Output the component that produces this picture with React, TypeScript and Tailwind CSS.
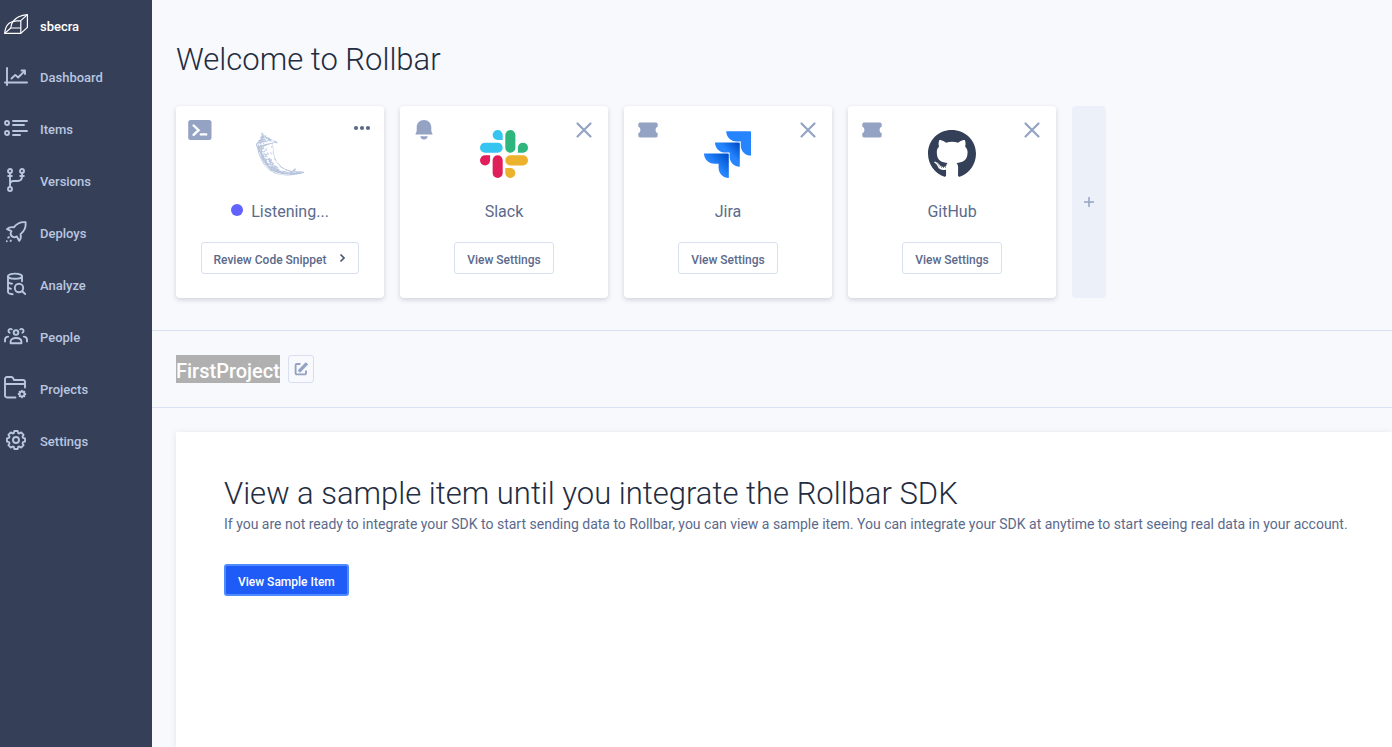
import type { ReactNode } from "react";
import { SiFlask } from "react-icons/si";
import { FaGithub } from "react-icons/fa";

function NavSvg({ children }: { children: ReactNode }) {
  return (
    <svg
      viewBox="0 0 24 24"
      className="size-6 shrink-0"
      fill="none"
      stroke="currentColor"
      strokeWidth="1.900"
      strokeLinecap="round"
      strokeLinejoin="round"
      aria-hidden="true"
    >
      {children}
    </svg>
  );
}

const navItems: { label: string; icon: ReactNode }[] = [
  {
    label: "Dashboard",
    icon: (
      <NavSvg>
        <path d="M3 4v17M1 18.500h22M7.500 14.500l3.800-3.600 2.800 2.600 6.200-6.200M17.500 6.500h3.500v3.500" />
      </NavSvg>
    ),
  },
  {
    label: "Items",
    icon: (
      <NavSvg>
        <circle cx="3" cy="7" r="2" />
        <circle cx="3" cy="17" r="2" />
        <path d="M9 5h14M9 9h11M9 15h14M9 19h7" />
      </NavSvg>
    ),
  },
  {
    label: "Versions",
    icon: (
      <NavSvg>
        <circle cx="6" cy="3" r="2" />
        <circle cx="18" cy="3" r="2" />
        <circle cx="6" cy="21" r="2" />
        <path d="M6 5.500v13M4.200 8h3.600M16.200 8h3.600M18 5.500v3c0 3-1.500 4.500-4.500 4.500H9.500c-2 0-3.500 1-3.500 3.500" />
      </NavSvg>
    ),
  },
  {
    label: "Deploys",
    icon: (
      <NavSvg>
        <path d="M21.600 2.200c-5.400-.5-9 1.400-11.800 5.200-2.600-.6-5.200.2-6.800 1.800l4.400 2-.9 2.500c.4 1.900 1.900 3.300 3.900 3.700l2.400-.9 2.400 4.300c1.600-1.800 2.100-4.200 1.300-6.600 4.300-3.200 5.600-7 5.100-12z" />
        <path d="M5 17.200l-.8.400M2.800 21.200h.01M6.800 20.600l-.2.400" />
      </NavSvg>
    ),
  },
  {
    label: "Analyze",
    icon: (
      <NavSvg>
        <ellipse cx="11" cy="4.200" rx="7" ry="2.600" />
        <path d="M4 4.200v15.800c0 1.200 2 1.900 4.600 2.300M18 4.200v5M4 9.500c0 1 1.600 1.800 4 2.200M4 14.800c0 1 1.400 1.600 3 2" />
        <circle cx="15" cy="16" r="4.200" />
        <path d="M18.200 19.200l3 2.800" />
      </NavSvg>
    ),
  },
  {
    label: "People",
    icon: (
      <NavSvg>
        <circle cx="12" cy="8.600" r="2.300" />
        <path d="M6.600 19.200v-1.600c0-2.300 2.200-3.600 5.400-3.600s5.400 1.300 5.400 3.600v1.600z" />
        <path d="M7.800 5.400a2 2 0 1 0-2.200 3.300M16.200 5.400a2 2 0 1 1 2.200 3.300" />
        <path d="M1 17.600v-1.800c0-2 1.400-3.200 3.200-3.200M23 17.600v-1.800c0-2-1.400-3.200-3.200-3.200" />
      </NavSvg>
    ),
  },
  {
    label: "Projects",
    icon: (
      <NavSvg>
        <path d="M11.500 21.500H3c-1.200 0-2-.8-2-2V3c0-1.200.8-2 2-2h4.300c1 0 1.600.5 2 1.400l.6 1.600h9.100c1.200 0 2 .8 2 2v5.500M1 8h20" />
        <circle cx="18" cy="18" r="2.500" />
        <path
          d="M18 14.600v.8M18 20.600v.8M14.600 18h.8M20.600 18h.8M15.600 15.600l.6.600M19.800 19.800l.6.600M20.400 15.600l-.6.600M16.200 19.800l-.6.600"
          strokeWidth="1.800"
        />
      </NavSvg>
    ),
  },
  {
    label: "Settings",
    icon: (
      <NavSvg>
        <path d="M10.300 3h3.400l.5 2 1.200.5 1.800-1.100 2.400 2.400-1.100 1.800.5 1.200 2 .5v3.400l-2 .5-.5 1.200 1.100 1.800-2.400 2.400-1.800-1.100-1.200.5-.5 2h-3.400l-.5-2-1.200-.5-1.800 1.100-2.400-2.400 1.100-1.800-.5-1.200-2-.5v-3.400l2-.5.5-1.200-1.100-1.800 2.400-2.400 1.800 1.100 1.200-.5z" />
        <circle cx="12" cy="12" r="3" />
      </NavSvg>
    ),
  },
];

function RollbarLogo() {
  return (
    <svg
      viewBox="0 0 24 24"
      className="size-6 shrink-0"
      fill="none"
      stroke="currentColor"
      strokeWidth="1.200"
      strokeLinejoin="round"
      aria-hidden="true"
    >
      <path d="M.7 20.400C1.100 16 2.200 12.600 4.600 10.700 6 9.600 7.400 9.200 8.700 8.600 11.800 4.600 16.200 2.200 23.400 1.600v12.800l-6.600 6z" />
      <path d="M16.800 20.400V7.600l6.600-6M8.700 8.600c2.600-.7 5-1 8.100-1M8.700 8.600C7.600 10.600 7 12.600 6.800 15M.7 20.400L6.800 15h10" />
    </svg>
  );
}

function Terminal() {
  return (
    <svg viewBox="0 0 24 24" className="size-6" aria-hidden="true">
      <rect x="0.200" y="2" width="23.300" height="20" rx="2.500" fill="#94a3c4" />
      <path
        d="M5.600 7.500l5 4.700-5 4.700M12.800 16.400h5.400"
        fill="none"
        stroke="#fff"
        strokeWidth="2.400"
        strokeLinecap="round"
      />
    </svg>
  );
}

function Bell() {
  return (
    <svg viewBox="0 0 24 24" className="size-6" fill="#94a3c4" aria-hidden="true">
      <path d="M12 2c4.300 0 7.300 3.200 7.300 7.400v3.800l1.100 2.400v1H3.600v-1l1.100-2.400V9.400C4.700 5.200 7.700 2 12 2z" />
      <path d="M8.200 18.200h7.600c-.4 2-1.900 3.300-3.800 3.300s-3.400-1.300-3.800-3.300z" />
    </svg>
  );
}

function Ticket() {
  return (
    <svg viewBox="0 0 24 24" className="size-6" fill="#94a3c4" aria-hidden="true">
      <path d="M4 4.500h16a1.700 1.700 0 0 1 1.700 1.700v2.600c-1.400.5-2.100 1.600-2.100 3.200s.7 2.700 2.100 3.200v2.600a1.700 1.700 0 0 1-1.700 1.700H4a1.700 1.700 0 0 1-1.700-1.700v-2.600c1.400-.5 2.100-1.600 2.100-3.200s-.7-2.700-2.100-3.200V6.200A1.700 1.700 0 0 1 4 4.500z" />
    </svg>
  );
}

function Close() {
  return (
    <svg viewBox="0 0 24 24" className="size-6" aria-hidden="true">
      <path
        d="M5.500 5.500l13 13M18.500 5.500l-13 13"
        stroke="#94a3c4"
        strokeWidth="2.200"
        strokeLinecap="round"
      />
    </svg>
  );
}

function Dots() {
  return (
    <svg viewBox="0 0 24 24" className="size-6" fill="#5b6a8c" aria-hidden="true">
      <circle cx="8" cy="10" r="2.100" />
      <circle cx="14" cy="10" r="2.100" />
      <circle cx="20" cy="10" r="2.100" />
    </svg>
  );
}

function Slack() {
  return (
    <svg viewBox="0 0 24 24" className="size-12" aria-hidden="true">
      <path
        fill="#e01e5a"
        d="M5.042 15.165a2.528 2.528 0 0 1-2.520 2.523A2.528 2.528 0 0 1 0 15.165a2.527 2.527 0 0 1 2.522-2.520h2.520v2.520zM6.313 15.165a2.527 2.527 0 0 1 2.521-2.520 2.527 2.527 0 0 1 2.521 2.520v6.313A2.528 2.528 0 0 1 8.834 24a2.528 2.528 0 0 1-2.521-2.522v-6.313z"
      />
      <path
        fill="#36c5f0"
        d="M8.834 5.042a2.528 2.528 0 0 1-2.521-2.520A2.528 2.528 0 0 1 8.834 0a2.528 2.528 0 0 1 2.521 2.522v2.520H8.834zM8.834 6.313a2.528 2.528 0 0 1 2.521 2.521 2.528 2.528 0 0 1-2.521 2.521H2.522A2.528 2.528 0 0 1 0 8.834a2.528 2.528 0 0 1 2.522-2.521h6.312z"
      />
      <path
        fill="#2eb67d"
        d="M18.956 8.834a2.528 2.528 0 0 1 2.522-2.521A2.528 2.528 0 0 1 24 8.834a2.528 2.528 0 0 1-2.522 2.521h-2.522V8.834zM17.688 8.834a2.528 2.528 0 0 1-2.523 2.521 2.527 2.527 0 0 1-2.520-2.521V2.522A2.527 2.527 0 0 1 15.165 0a2.528 2.528 0 0 1 2.523 2.522v6.312z"
      />
      <path
        fill="#ecb22e"
        d="M15.165 18.956a2.528 2.528 0 0 1 2.523 2.522A2.528 2.528 0 0 1 15.165 24a2.527 2.527 0 0 1-2.520-2.522v-2.522h2.520zM15.165 17.688a2.527 2.527 0 0 1-2.520-2.523 2.526 2.526 0 0 1 2.520-2.520h6.313A2.527 2.527 0 0 1 24 15.165a2.528 2.528 0 0 1-2.522 2.523h-6.313z"
      />
    </svg>
  );
}

function Jira() {
  return (
    <svg viewBox="0 0 48 48" className="size-12" aria-hidden="true">
      <defs>
        <linearGradient id="jira-mid" x1="35" y1="13" x2="25" y2="23" gradientUnits="userSpaceOnUse">
          <stop offset="0.100" stopColor="#0052cc" />
          <stop offset="1" stopColor="#2684ff" />
        </linearGradient>
        <linearGradient id="jira-low" x1="24" y1="24" x2="12" y2="36" gradientUnits="userSpaceOnUse">
          <stop offset="0.100" stopColor="#0052cc" />
          <stop offset="1" stopColor="#2684ff" />
        </linearGradient>
      </defs>
      <path fill="#2684ff" d="M22.200 1.200H46a1 1 0 0 1 1 1v23.400c-5.700 0-10.200-4.600-10.200-10.200v-4h-4.200c-5.700 0-10.400-4.500-10.400-10.200z" />
      <path fill="url(#jira-mid)" d="M11 12.400h23.800a1 1 0 0 1 1 1v23.400c-5.700 0-10.200-4.600-10.200-10.200v-4h-4.200C15.700 22.600 11 18.100 11 12.400z" />
      <path fill="url(#jira-low)" d="M0 23.600h23.800a1 1 0 0 1 1 1V48c-5.700 0-10.200-4.600-10.200-10.200v-4h-4.200C4.700 33.800 0 29.300 0 23.600z" />
    </svg>
  );
}

type Integration = {
  name: string;
  kind: ReactNode;
  logo: ReactNode;
  listening?: boolean;
};

const integrations: Integration[] = [
  { name: "Listening...", kind: <Terminal />, logo: <SiFlask className="size-12 text-[#b8c5de]" />, listening: true },
  { name: "Slack", kind: <Bell />, logo: <Slack /> },
  { name: "Jira", kind: <Ticket />, logo: <Jira /> },
  { name: "GitHub", kind: <Ticket />, logo: <FaGithub className="size-[50px] text-[#343f58]" /> },
];

function IntegrationCard({ name, kind, logo, listening }: Integration) {
  return (
    <article className="flex w-52 flex-col items-center rounded bg-white px-3 pt-3 pb-6 shadow-[0_2px_5px_rgba(52,63,88,0.2)]">
      <div className="flex w-full items-start justify-between">
        {kind}
        <div className="mt-3 flex size-12 items-center justify-center">{logo}</div>
        <button type="button" aria-label={listening ? "More options" : `Remove ${name}`}>
          {listening ? <Dots /> : <Close />}
        </button>
      </div>
      <h2 className="mt-5 flex h-6 items-center gap-2 text-base leading-6 text-[#5b6a8c]">
        {listening && <span className="size-3 rounded-full bg-[#6262ff]" />}
        <span className="pt-[3px]">{name}</span>
      </h2>
      <button
        type="button"
        className="mt-5 flex h-8 items-center gap-3 rounded-[3px] border border-[#d7dff0] px-3 text-xs font-medium text-[#5b6a8c]"
      >
        <span className="pt-[3px]">{listening ? "Review Code Snippet" : "View Settings"}</span>
        {listening && (
          <svg viewBox="0 0 8 12" className="h-3 w-2" aria-hidden="true">
            <path d="M2.500 2.500l3.500 3.500-3.500 3.500" fill="none" stroke="#4b5877" strokeWidth="1.700" />
          </svg>
        )}
      </button>
    </article>
  );
}

export default function App() {
  return (
    <div className="flex min-h-screen bg-[#f8f9fd] font-[Roboto,sans-serif]">
      <aside className="w-38 shrink-0 bg-[#353f57]">
        <nav aria-label="Main">
          <a href="#account" className="flex h-[50px] items-center gap-3 px-1 text-[13px] font-medium text-white">
            <RollbarLogo />
            <span className="pt-[3px]">sbecra</span>
          </a>
          {navItems.map((item) => (
            <a
              key={item.label}
              href={`#${item.label.toLowerCase()}`}
              className="flex h-[52px] items-center gap-3 px-1 text-[13px] font-medium text-[#b9c6e0]"
            >
              {item.icon}
              <span className="pt-[3px]">{item.label}</span>
            </a>
          ))}
        </nav>
      </aside>
      <main className="flex min-w-0 flex-1 flex-col">
        <section className="border-b border-[#d9e1f2] px-6 pt-[42px] pb-8">
          <h1 className="text-[31px] leading-9 font-light text-[#232c40]">Welcome to Rollbar</h1>
          <div className="mt-7 flex gap-4">
            {integrations.map((item) => (
              <IntegrationCard key={item.name} {...item} />
            ))}
            <button
              type="button"
              aria-label="Add integration"
              className="flex w-[34px] items-center justify-center rounded bg-[#ecf0f8]"
            >
              <svg viewBox="0 0 10 10" className="size-[10px]" aria-hidden="true">
                <path d="M5 0v10M0 5h10" stroke="#94a3c4" strokeWidth="1.500" />
              </svg>
            </button>
          </div>
        </section>
        <section className="flex items-center gap-2 border-b border-[#d9e1f2] px-6 py-6">
          <h2 className="bg-[#b0b0b0] pt-1 text-[20px] leading-6 font-medium text-white">FirstProject</h2>
          <button
            type="button"
            aria-label="Rename project"
            className="flex h-7 w-[26px] items-center justify-center rounded-[3px] border border-[#d7dff0]"
          >
            <svg viewBox="0 0 14 14" className="size-[14px]" fill="none" stroke="#94a3c4" aria-hidden="true">
              <path d="M6.500 2H2.800a1.200 1.200 0 0 0-1.200 1.200v8a1.200 1.200 0 0 0 1.200 1.200h8a1.200 1.200 0 0 0 1.200-1.200V8.500" strokeWidth="1.900" />
              <path d="M6 8.400l5.800-6" strokeWidth="3.200" strokeLinecap="square" />
            </svg>
          </button>
        </section>
        <section className="mt-6 ml-6 flex-1 bg-white px-12 pt-11 shadow-[0_1px_6px_rgba(52,63,88,0.12)]">
          <div className="w-max">
            <h2 className="text-[31px] leading-9 font-light text-[#232c40]">
              View a sample item until you integrate the Rollbar SDK
            </h2>
            <p className="text-sm leading-6 text-[#5b6a8c]">
              If you are not ready to integrate your SDK to start sending data to Rollbar, you can view a sample item.
              You can integrate your SDK at anytime to start seeing real data in your account.
            </p>
            <button
              type="button"
              className="mt-7 h-8 rounded-[3px] border-2 border-[#4d8bff] bg-[#1f5bf6] px-3 pt-[3px] text-xs font-medium text-white"
            >
              View Sample Item
            </button>
          </div>
        </section>
      </main>
    </div>
  );
}
